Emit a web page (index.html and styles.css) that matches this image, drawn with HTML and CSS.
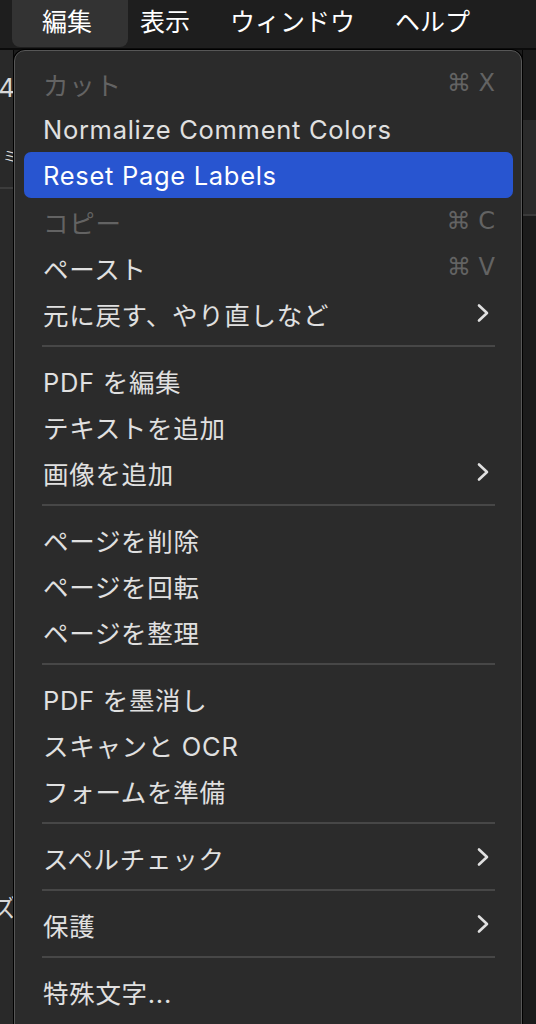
FILE: index.html
```html
<!DOCTYPE html>
<html lang="ja">
<head>
  <meta charset="UTF-8">
  <meta name="viewport" content="width=device-width, initial-scale=1.0">
  <title>編集メニュー</title>
  <link rel="stylesheet" href="styles.css">
</head>
<body>
  <div class="menubar">
    <div class="bar-item active">編集</div>
    <div class="bar-item">表示</div>
    <div class="bar-item">ウィンドウ</div>
    <div class="bar-item">ヘルプ</div>
  </div>

  <div class="workspace">
    <div class="side-left">
      <div class="side-num">2024</div>
      <div class="side-mark">ミ</div>
      <div class="side-rule"></div>
      <div class="side-bottom">ズ</div>
    </div>
    <div class="doc-area"></div>
    <div class="side-right">
      <div class="side-panel"></div>
    </div>

    <div class="dropdown">
      <div class="item disabled"><span>カット</span><span class="shortcut">⌘ X</span></div>
      <div class="item"><span>Normalize Comment Colors</span></div>
      <div class="item selected"><span>Reset Page Labels</span></div>
      <div class="item disabled"><span>コピー</span><span class="shortcut">⌘ C</span></div>
      <div class="item"><span>ペースト</span><span class="shortcut">⌘ V</span></div>
      <div class="item"><span>元に戻す、やり直しなど</span>
        <svg class="chevron" width="14" height="20" viewBox="0 0 14 20"><path d="M3 2.5 L11 10 L3 17.5" /></svg>
      </div>
      <div class="sep"></div>
      <div class="item"><span>PDF を編集</span></div>
      <div class="item"><span>テキストを追加</span></div>
      <div class="item"><span>画像を追加</span>
        <svg class="chevron" width="14" height="20" viewBox="0 0 14 20"><path d="M3 2.5 L11 10 L3 17.5" /></svg>
      </div>
      <div class="sep"></div>
      <div class="item"><span>ページを削除</span></div>
      <div class="item"><span>ページを回転</span></div>
      <div class="item"><span>ページを整理</span></div>
      <div class="sep"></div>
      <div class="item"><span>PDF を墨消し</span></div>
      <div class="item"><span>スキャンと OCR</span></div>
      <div class="item"><span>フォームを準備</span></div>
      <div class="sep"></div>
      <div class="item"><span>スペルチェック</span>
        <svg class="chevron" width="14" height="20" viewBox="0 0 14 20"><path d="M3 2.5 L11 10 L3 17.5" /></svg>
      </div>
      <div class="sep"></div>
      <div class="item"><span>保護</span>
        <svg class="chevron" width="14" height="20" viewBox="0 0 14 20"><path d="M3 2.5 L11 10 L3 17.5" /></svg>
      </div>
      <div class="sep"></div>
      <div class="item"><span>特殊文字...</span></div>
    </div>
  </div>
</body>
</html>
```

FILE: styles.css
```css
body {
  margin: 0;
  padding: 0;
  width: 536px;
  height: 1024px;
  overflow: hidden;
  background: #1c1c1c;
  color: #e0e0e0;
  font-family: Inter, "Noto Sans CJK JP", sans-serif;
}

/* top menu bar */
.menubar {
  display: flex;
  height: 48px;
  padding-left: 12px;
  background: #1e1e1e;
  border-bottom: 2px solid #0b0b0b;
}

.bar-item {
  padding: 0 20px;
  height: 47px;
  line-height: 45px;
  font-size: 25px;
  color: #ffffff;
}

.bar-item.active {
  padding: 0 36px 0 30px;
  background: #333333;
  border-radius: 0 0 8px 8px;
}

.bar-item.active + .bar-item {
  padding-left: 12px;
}

/* what lies behind the menu */
.workspace {
  position: relative;
  display: flex;
  height: 974px;
}

.side-left {
  width: 13px;
  background: #292929;
  border-right: 1px solid #050505;
  overflow: hidden;
  color: #d8d8d8;
  font-size: 26px;
}

.side-num {
  margin-top: 22px;
  margin-left: -55px;
  width: 70px;
  direction: rtl;
  white-space: nowrap;
}

.side-mark {
  margin-top: 42px;
  margin-left: 3px;
  font-size: 14px;
}

.side-rule {
  margin-top: 22px;
  height: 2px;
  background: #3c3c3c;
}

.side-bottom {
  margin-top: 700px;
  margin-left: -8px;
  font-size: 24px;
}

.doc-area {
  flex: 1;
}

.side-right {
  width: 13px;
  background: #1b1b1b;
  border-left: 1px solid #050505;
}

.side-panel {
  margin-top: 70px;
  height: 94px;
  background: #2a2a2a;
  border-bottom: 2px solid #3a3a3a;
}

/* the dropdown */
.dropdown {
  position: absolute;
  top: 0;
  left: 14px;
  width: 489px;
  height: 990px;
  padding: 9px 8px 0 9px;
  background: #2b2b2b;
  border: 1px solid #575757;
  border-radius: 11px 11px 0 0;
  box-shadow: 0 0 0 1px #000000;
}

.item {
  display: flex;
  justify-content: space-between;
  align-items: center;
  height: 46px;
  padding: 0 18px 0 19px;
  border-radius: 7px;
  font-size: 25.5px;
  letter-spacing: 0.7px;
  color: #e0e0e0;
}

.item.disabled {
  color: #636363;
}

.item.selected {
  background: #2855d0;
  color: #ffffff;
}

.shortcut {
  color: #636363;
  font-family: "DejaVu Sans", Inter, sans-serif;
  font-size: 24px;
  letter-spacing: 0;
}

.chevron {
  margin-right: 5px;
}

.chevron path {
  fill: none;
  stroke: #e0e0e0;
  stroke-width: 2.6;
  stroke-linecap: round;
  stroke-linejoin: round;
}

.sep {
  height: 2px;
  margin: 9px 18px 10px 18px;
  background: #474747;
}
```
